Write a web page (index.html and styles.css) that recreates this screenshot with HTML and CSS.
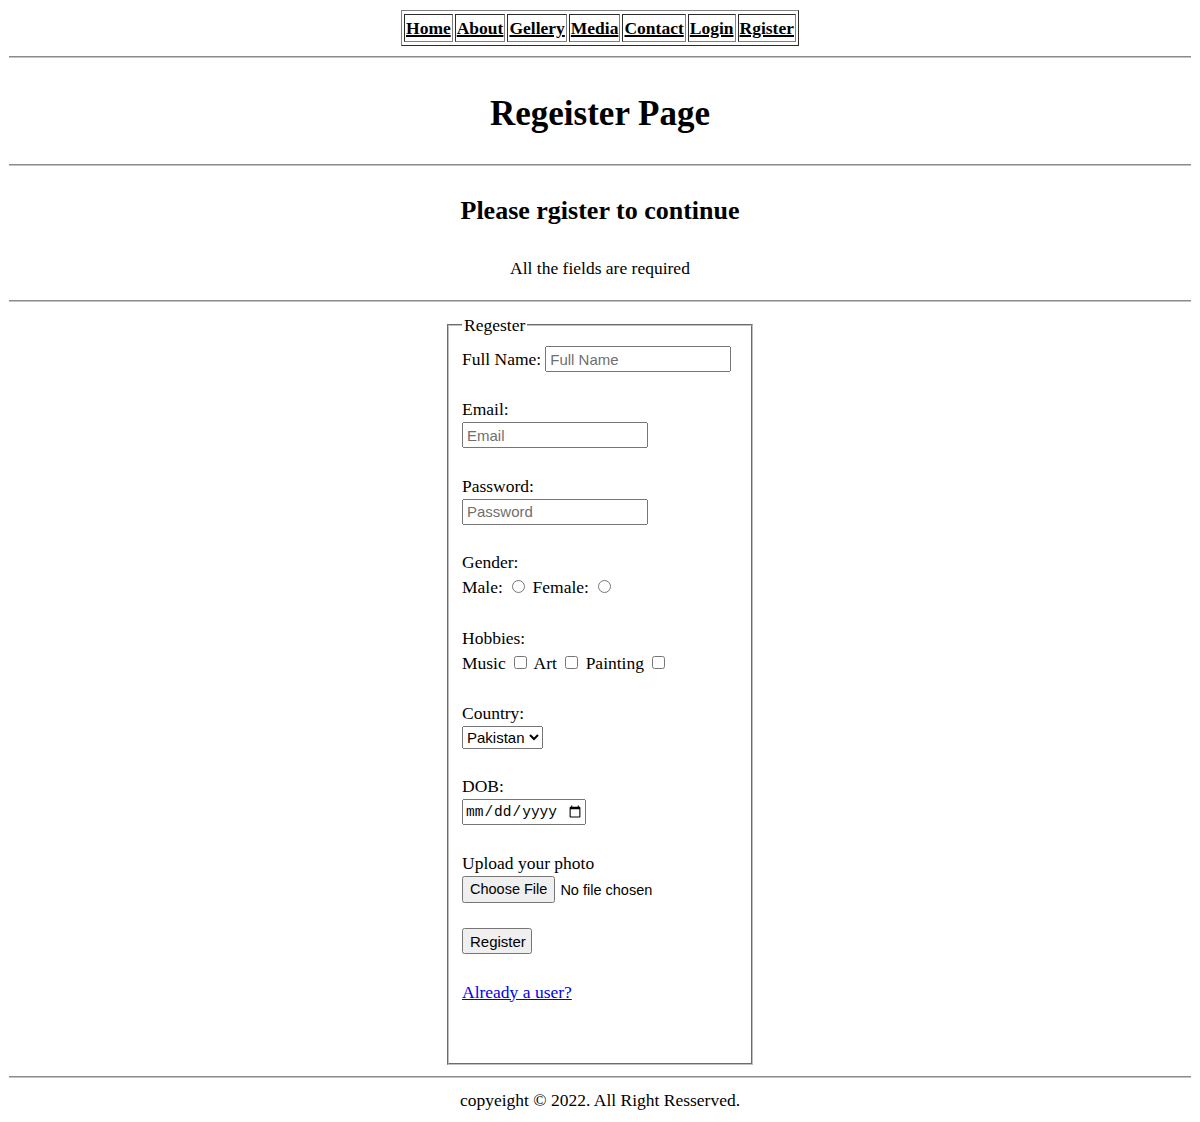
FILE: index.html
```html
<!DOCTYPE html>
<html lang="en">
<head>
<meta charset="utf-8">
<title>Register</title>
<link rel="stylesheet" href="styles.css">
</head>
<body class="page">
<nav class="topnav">
  <table class="nav-table">
    <tr>
      <td class="nav-cell"><a class="nav-link" href="#">Home</a></td>
      <td class="nav-cell"><a class="nav-link" href="#">About</a></td>
      <td class="nav-cell"><a class="nav-link" href="#">Gellery</a></td>
      <td class="nav-cell"><a class="nav-link" href="#">Media</a></td>
      <td class="nav-cell"><a class="nav-link" href="#">Contact</a></td>
      <td class="nav-cell"><a class="nav-link" href="#">Login</a></td>
      <td class="nav-cell"><a class="nav-link" href="#">Rgister</a></td>
    </tr>
  </table>
</nav>
<hr class="rule">
<h1 class="page-title">Regeister Page</h1>
<hr class="rule">
<h2 class="subtitle">Please rgister to continue</h2>
<p class="note">All the fields are required</p>
<hr class="rule">
<form class="reg-form">
  <fieldset class="reg-fieldset">
    <legend class="reg-legend">Regester</legend>
    <div class="field field-inline">
      <label class="lbl" for="fullname">Full Name:</label>
      <input class="text-input" id="fullname" type="text" placeholder="Full Name">
    </div>
    <div class="field">
      <label class="lbl" for="email">Email:</label>
      <input class="text-input" id="email" type="email" placeholder="Email">
    </div>
    <div class="field">
      <label class="lbl" for="pass">Password:</label>
      <input class="text-input" id="pass" type="password" placeholder="Password">
    </div>
    <div class="field">
      <span class="lbl">Gender:</span>
      <div class="options">Male: <input class="radio" type="radio" name="g"> Female: <input class="radio" type="radio" name="g"></div>
    </div>
    <div class="field">
      <span class="lbl">Hobbies:</span>
      <div class="options">Music <input class="check" type="checkbox"> Art <input class="check" type="checkbox"> Painting <input class="check" type="checkbox"></div>
    </div>
    <div class="field">
      <label class="lbl" for="country">Country:</label>
      <select class="select-input" id="country">
        <option>Pakistan</option>
        <option>India</option>
        <option>China</option>
      </select>
    </div>
    <div class="field">
      <label class="lbl" for="dob">DOB:</label>
      <input class="date-input" id="dob" type="date">
    </div>
    <div class="field">
      <label class="lbl" for="photo">Upload your photo</label>
      <input class="file-input" id="photo" type="file">
    </div>
    <div class="field">
      <button class="submit-btn" type="button">Register</button>
    </div>
    <div class="field field-last">
      <a class="login-link" href="#">Already a user?</a>
    </div>
  </fieldset>
</form>
<hr class="rule">
<footer class="footer">
  <p class="copy">copyeight © 2022. All Right Resserved.</p>
</footer>
</body>
</html>
```

FILE: styles.css
```css
.page {
  margin: 10px 9px;
  font-family: "Liberation Serif", "Times New Roman", serif;
  font-size: 17.5px;
  color: #000;
  background: #fff;
}

.topnav {
  display: block;
}

.nav-table {
  margin: 0 auto;
  border-collapse: separate;
  border-spacing: 2px 3px;
  border: 1px outset #808080;
}

.nav-cell {
  border: 1px inset #808080;
  padding: 1px;
  line-height: 24px;
}

.nav-link {
  color: #000;
  font-weight: bold;
  text-decoration: underline;
  text-decoration-thickness: 2px;
}

.rule {
  height: 0;
  margin: 10px 0;
  border: 0;
  border-top: 1px solid #8a8a8a;
  border-bottom: 1px solid #c4c4c4;
}

.page-title {
  margin: 33px 0 28px;
  font-size: 35px;
  line-height: 45px;
  font-weight: bold;
  text-align: center;
}

.subtitle {
  margin: 29px 0 30px;
  font-size: 26px;
  line-height: 32px;
  font-weight: bold;
  text-align: center;
}

.note {
  margin: 30px 0 21px;
  line-height: 22px;
  text-align: center;
}

.reg-form {
  margin: 0;
}

.reg-fieldset {
  box-sizing: border-box;
  width: 306px;
  min-width: 0;
  margin: 12px auto 11px;
  padding: 10px 13px 58.4px;
  border: 2px groove #c0c0c0;
}

.reg-legend {
  padding: 0 2px;
  line-height: 22px;
}

.field {
  margin-bottom: 25.4px;
  line-height: 25px;
}

.field-last {
  margin-bottom: 0;
}

.field-inline {
  display: flex;
  align-items: center;
  gap: 4px;
  height: 26px;
}

.lbl {
  display: block;
  line-height: 25px;
}

.text-input {
  display: block;
  box-sizing: border-box;
  width: 186px;
  height: 26px;
  margin: 0;
  padding: 1px 3px;
  font-family: "Liberation Sans", Arial, sans-serif;
  font-size: 15px;
}

.text-input::placeholder {
  color: #6f6f6f;
}

.options {
  line-height: 25px;
}

.radio {
  width: 13px;
  height: 13px;
  margin: 3px 3px 0 5px;
}

.check {
  width: 13px;
  height: 13px;
  margin: 3px 3px 3px 4px;
}

.select-input {
  display: block;
  box-sizing: border-box;
  width: 81px;
  height: 23px;
  margin: 0;
  font-family: "Liberation Sans", Arial, sans-serif;
  font-size: 15px;
}

.date-input {
  display: block;
  box-sizing: border-box;
  width: 124px;
  height: 26px;
  margin: 0;
  font-family: "Liberation Mono", monospace;
  font-size: 14.5px;
}

.file-input {
  display: block;
  width: 200px;
  height: 27px;
  margin: 0;
  font-family: "Liberation Sans", Arial, sans-serif;
  font-size: 14.5px;
}

.file-input::file-selector-button {
  height: 27px;
  padding: 1px 6px;
  margin-right: 5px;
}

.submit-btn {
  display: block;
  box-sizing: border-box;
  width: 70px;
  height: 26px;
  margin: 0;
  padding: 1px 6px;
  font-family: "Liberation Sans", Arial, sans-serif;
  font-size: 15px;
}

.login-link {
  color: #0000ee;
  text-decoration: underline;
}

.footer {
  display: block;
}

.copy {
  margin: 11px 0 0;
  line-height: 22px;
  text-align: center;
}
```
